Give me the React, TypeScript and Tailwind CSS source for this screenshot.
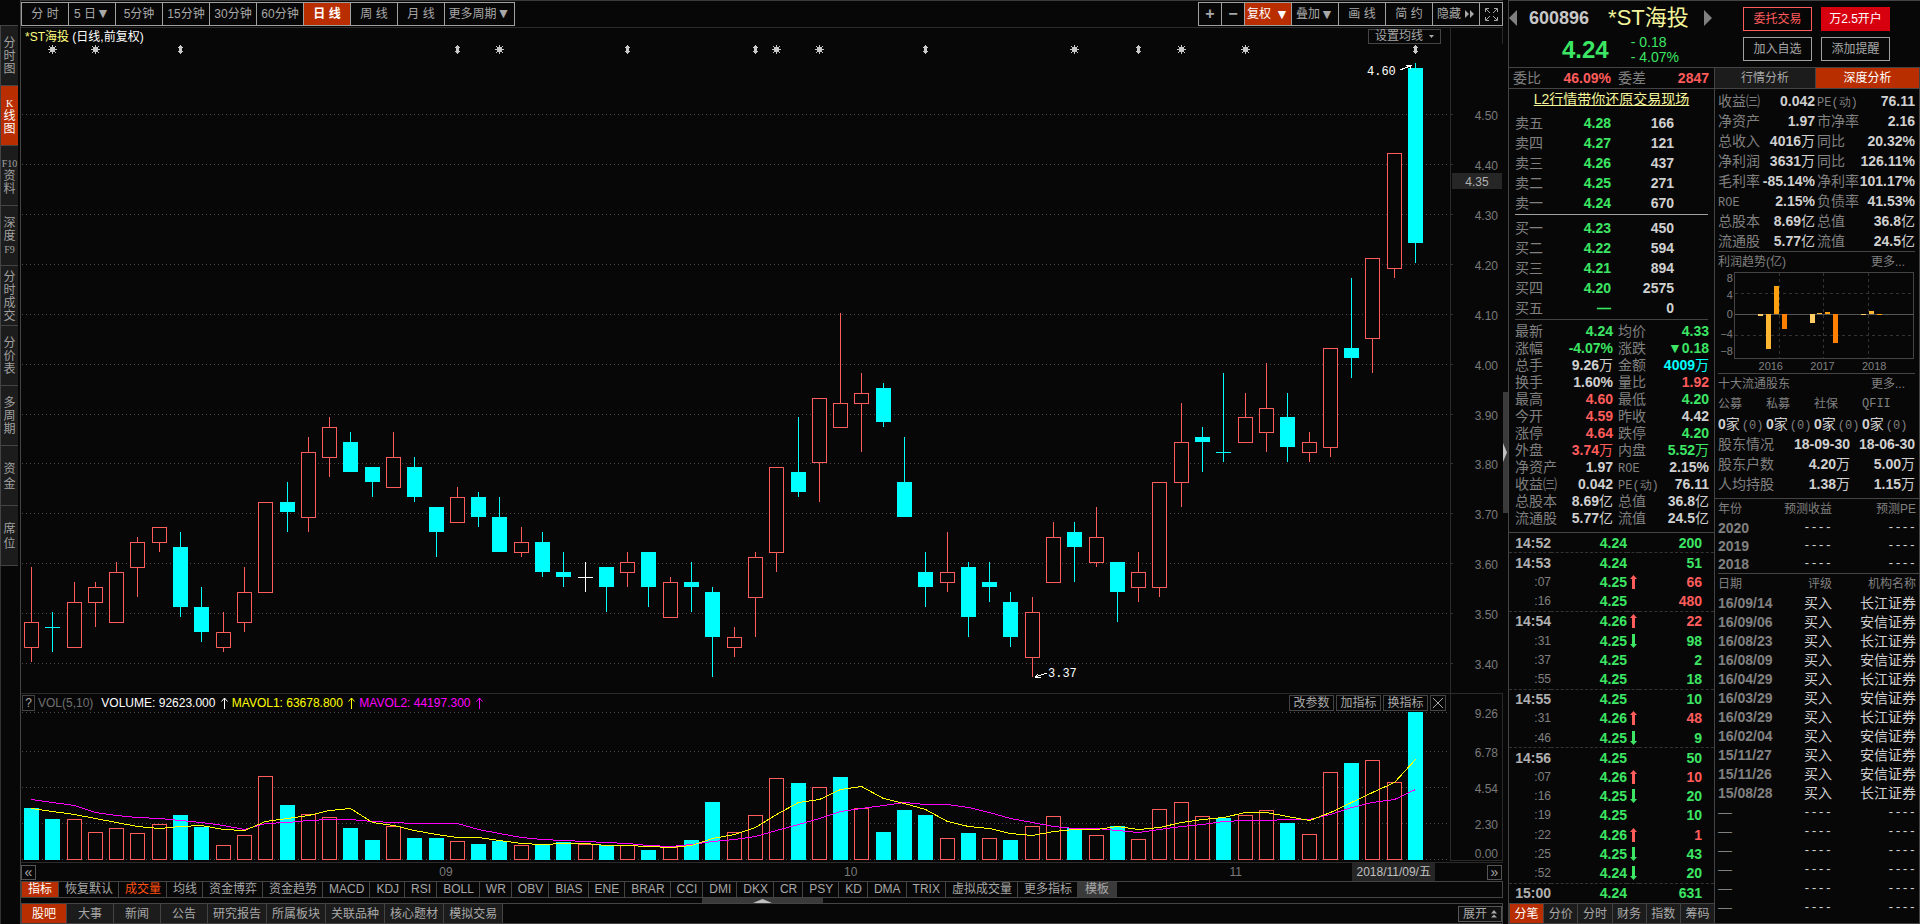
import { useState } from "react";

type Kind = "r" | "c" | "w";
// high, body top, body bottom, low (in cents), price kind, volume bar height, volume kind
type Candle = [number, number, number, number, Kind, number, Kind];

const CANDLES: Candle[] = [
  [359, 348, 343, 340, "r", 52, "c"],
  [350, 347, 347, 342, "c", 41, "c"],
  [356, 352, 343, 343, "r", 41, "r"],
  [356, 355, 352, 347, "r", 28, "r"],
  [360, 358, 348, 348, "r", 32, "r"],
  [365, 364, 359, 353, "r", 27, "r"],
  [367, 367, 364, 362, "r", 36, "r"],
  [366, 363, 351, 349, "c", 45, "c"],
  [355, 351, 346, 344, "c", 33, "c"],
  [350, 346, 343, 342, "r", 15, "r"],
  [359, 354, 348, 346, "r", 25, "r"],
  [372, 372, 354, 354, "r", 84, "r"],
  [376, 372, 370, 366, "c", 55, "c"],
  [385, 382, 369, 366, "r", 46, "r"],
  [389, 387, 381, 377, "r", 43, "r"],
  [386, 384, 378, 378, "c", 32, "c"],
  [379, 379, 376, 373, "c", 20, "c"],
  [386, 381, 375, 375, "r", 34, "r"],
  [381, 379, 373, 372, "c", 22, "c"],
  [371, 371, 366, 361, "c", 22, "c"],
  [375, 373, 368, 368, "r", 19, "r"],
  [374, 373, 369, 367, "c", 16, "c"],
  [373, 369, 362, 362, "c", 19, "c"],
  [367, 364, 362, 361, "r", 15, "r"],
  [366, 364, 358, 357, "c", 16, "c"],
  [362, 358, 357, 355, "c", 18, "c"],
  [360, 357, 357, 354, "w", 16, "r"],
  [359, 359, 355, 350, "c", 15, "c"],
  [362, 360, 358, 355, "r", 15, "r"],
  [362, 362, 355, 351, "c", 10, "c"],
  [357, 356, 349, 349, "r", 13, "r"],
  [360, 356, 355, 350, "c", 20, "c"],
  [355, 354, 345, 337, "c", 58, "c"],
  [347, 345, 343, 341, "r", 28, "r"],
  [362, 361, 353, 345, "r", 45, "r"],
  [379, 379, 362, 358, "r", 82, "r"],
  [389, 378, 374, 373, "c", 77, "c"],
  [393, 393, 380, 372, "r", 73, "r"],
  [410, 392, 387, 387, "r", 83, "c"],
  [398, 394, 392, 382, "r", 52, "r"],
  [396, 395, 388, 387, "c", 28, "c"],
  [385, 376, 369, 369, "c", 50, "c"],
  [362, 358, 355, 351, "c", 45, "c"],
  [366, 358, 356, 354, "r", 22, "r"],
  [360, 359, 349, 345, "c", 27, "c"],
  [360, 356, 355, 352, "c", 22, "r"],
  [354, 352, 345, 343, "c", 20, "c"],
  [353, 350, 341, 337, "r", 34, "r"],
  [368, 365, 356, 356, "r", 44, "r"],
  [368, 366, 363, 356, "c", 32, "c"],
  [371, 365, 360, 359, "r", 25, "r"],
  [360, 360, 354, 348, "c", 34, "c"],
  [362, 358, 355, 352, "r", 21, "r"],
  [376, 376, 355, 353, "r", 51, "r"],
  [392, 384, 376, 371, "r", 58, "r"],
  [387, 385, 384, 378, "c", 44, "r"],
  [398, 382, 382, 380, "c", 42, "c"],
  [394, 389, 384, 384, "r", 45, "r"],
  [400, 391, 386, 382, "r", 50, "r"],
  [394, 389, 383, 380, "c", 37, "c"],
  [386, 384, 382, 380, "r", 26, "r"],
  [403, 403, 383, 381, "r", 88, "r"],
  [417, 403, 401, 397, "c", 97, "c"],
  [421, 421, 405, 398, "r", 100, "r"],
  [442, 442, 419, 417, "r", 78, "r"],
  [460, 459, 424, 420, "c", 148, "c"],
];

const MAVOL1 = [
  52, 49, 46, 42, 38, 34, 32, 34, 35, 31, 30, 39, 42, 45, 50, 52, 38, 35, 30, 26, 23, 23, 20, 17, 16, 17, 17, 15, 15, 14, 13,
  15, 22, 26, 33, 46, 58, 61, 71, 74, 62, 57, 51, 39, 34, 32, 27, 25, 29, 31, 31, 34, 31, 33, 38, 41, 43, 48, 48, 44, 40, 48,
  58, 68, 78, 101,
];
const MAVOL2 = [
  61, 58, 55, 48, 45, 43, 42, 40, 38, 35, 31, 37, 38, 40, 41, 41, 39, 38, 37, 37, 37, 31, 27, 23, 21, 20, 19, 18, 17, 15, 14,
  16, 19, 21, 24, 30, 36, 42, 49, 52, 55, 58, 56, 56, 53, 48, 42, 38, 34, 32, 32, 30, 28, 31, 34, 36, 39, 40, 40, 41, 41, 46,
  53, 58, 61, 71,
];

const SUNS = [1, 3, 22, 35, 37, 49, 54, 57];
const DIAMONDS = [7, 20, 28, 34, 42, 52, 65];
const PRICE_TICKS = [450, 440, 430, 420, 410, 400, 390, 380, 370, 360, 350, 340];
const VOL_TICKS: [string, number, number][] = [
  ["9.26", 1, 7],
  ["6.78", 40, 46],
  ["4.54", 76, 82],
  ["2.30", 112, 118],
  ["0.00", 148, 147],
];

const COLORS = { r: "#ff5c5c", c: "#00ffff", w: "#ffffff" };

const cx = (i: number) => Math.round(10 + i * 21.2923);
const cy = (p: number) => Math.round(618 - (p - 340) * 4.99);

const PERIODS = ["分 时", "5 日▼", "5分钟", "15分钟", "30分钟", "60分钟", "日 线", "周 线", "月 线"];
const SIDE = [
  ["分", "时", "图"],
  ["K", "线", "图"],
  ["F10", "资", "料"],
  ["深", "度", "F9"],
  ["分", "时", "成", "交"],
  ["分", "价", "表"],
  ["多", "周", "期"],
  ["资", "金"],
  ["席", "位"],
];
const INDICATORS = [
  "恢复默认", "成交量", "均线", "资金博弈", "资金趋势", "MACD", "KDJ", "RSI", "BOLL", "WR", "OBV", "BIAS", "ENE",
  "BRAR", "CCI", "DMI", "DKX", "CR", "PSY", "KD", "DMA", "TRIX", "虚拟成交量", "更多指标",
];
const BOTTOM = ["股吧", "大事", "新闻", "公告", "研究报告", "所属板块", "关联品种", "核心题材", "模拟交易"];

const ASKS = [["卖五", "4.28", "166"], ["卖四", "4.27", "121"], ["卖三", "4.26", "437"], ["卖二", "4.25", "271"], ["卖一", "4.24", "670"]];
const BIDS = [["买一", "4.23", "450"], ["买二", "4.22", "594"], ["买三", "4.21", "894"], ["买四", "4.20", "2575"], ["买五", "—", "0"]];

const G = "text-[#3ce664]";
const R = "text-[#ff5c5c]";
const W = "text-[#d0d0d0]";
const QUOTES = [
  ["最新", "4.24", G, "均价", "4.33", G],
  ["涨幅", "-4.07%", G, "涨跌", "▼0.18", G],
  ["总手", "9.26万", W, "金额", "4009万", "text-[#00ffff]"],
  ["换手", "1.60%", W, "量比", "1.92", R],
  ["最高", "4.60", R, "最低", "4.20", G],
  ["今开", "4.59", R, "昨收", "4.42", W],
  ["涨停", "4.64", R, "跌停", "4.20", G],
  ["外盘", "3.74万", R, "内盘", "5.52万", G],
  ["净资产", "1.97", W, "ROE", "2.15%", W],
  ["收益㈢", "0.042", W, "PE(动)", "76.11", W],
  ["总股本", "8.69亿", W, "总值", "36.8亿", W],
  ["流通股", "5.77亿", W, "流值", "24.5亿", W],
];

// time, price, direction, quantity, quantity color, closes a minute
const TICKS: [string, string, string, string, string, boolean][] = [
  ["14:52", "4.24", "", "200", G, true],
  ["14:53", "4.24", "", "51", G, false],
  [":07", "4.25", "up", "66", R, false],
  [":16", "4.25", "", "480", R, true],
  ["14:54", "4.26", "up", "22", R, false],
  [":31", "4.25", "down", "98", G, false],
  [":37", "4.25", "", "2", G, false],
  [":55", "4.25", "", "18", G, true],
  ["14:55", "4.25", "", "10", G, false],
  [":31", "4.26", "up", "48", R, false],
  [":46", "4.25", "down", "9", G, true],
  ["14:56", "4.25", "", "50", G, false],
  [":07", "4.26", "up", "10", R, false],
  [":16", "4.25", "down", "20", G, false],
  [":19", "4.25", "", "10", G, false],
  [":22", "4.26", "up", "1", R, false],
  [":25", "4.25", "down", "43", G, false],
  [":52", "4.24", "down", "20", G, true],
  ["15:00", "4.24", "", "631", G, false],
];
const TICK_TABS = ["分笔", "分价", "分时", "财务", "指数", "筹码"];

const FINANCE = [
  ["收益㈢", "0.042", "PE(动)", "76.11"],
  ["净资产", "1.97", "市净率", "2.16"],
  ["总收入", "4016万", "同比", "20.32%"],
  ["净利润", "3631万", "同比", "126.11%"],
  ["毛利率", "-85.14%", "净利率", "101.17%"],
  ["ROE", "2.15%", "负债率", "41.53%"],
  ["总股本", "8.69亿", "总值", "36.8亿"],
  ["流通股", "5.77亿", "流值", "24.5亿"],
];
const HOLDERS = [
  ["股东情况", "18-09-30", "18-06-30"],
  ["股东户数", "4.20万", "5.00万"],
  ["人均持股", "1.38万", "1.15万"],
];
const RATINGS = [
  ["16/09/14", "长江证券"],
  ["16/09/06", "安信证券"],
  ["16/08/23", "长江证券"],
  ["16/08/09", "安信证券"],
  ["16/04/29", "长江证券"],
  ["16/03/29", "安信证券"],
  ["16/03/29", "长江证券"],
  ["16/02/04", "安信证券"],
  ["15/11/27", "安信证券"],
  ["15/11/26", "安信证券"],
  ["15/08/28", "长江证券"],
];
// x, y, height, color
const PROFIT_BARS: [number, number, number, string][] = [
  [40, 43, 2, "#ffcc66"],
  [48, 43, 35, "#ffb733"],
  [56, 15, 28, "#ffa010"],
  [64, 43, 15, "#ff8000"],
  [92, 43, 9, "#ffcc66"],
  [100, 42, 1, "#ffb733"],
  [108, 41, 2, "#ffa010"],
  [116, 43, 29, "#ff8000"],
  [144, 43, 1, "#ffcc66"],
  [152, 40, 3, "#ffb733"],
  [160, 43, 1, "#ffa010"],
];

// number in bold, the trailing unit (万, 亿) in normal weight
function Num({ v }: { v: string }) {
  const unit = /[万亿]$/.test(v) ? v.slice(-1) : "";
  const n = unit ? v.slice(0, -1) : v;
  return (
    <>
      <b>{n}</b>
      {unit}
    </>
  );
}

function Label({ t }: { t: string }) {
  const latin = /^[A-Z]/.test(t);
  return (
    <span className={latin ? "font-mono text-xs leading-none text-[#808080]" : "text-sm leading-none text-[#808080]"}>{t}</span>
  );
}

function Caret() {
  return <span className="text-sm leading-none">▼</span>;
}

function PriceChart() {
  return (
    <svg viewBox="0 0 1482 650" className="block h-auto w-full" shapeRendering="crispEdges">
      {PRICE_TICKS.map((p) => {
        const y = cy(p) + 1.5;
        return (
          <g key={p}>
            <line x1="1" x2="1430" y1={y} y2={y} stroke="#4a4a4a" strokeDasharray="1 3" />
            <line x1="1430" x2="1432" y1={y} y2={y} stroke="#333" />
            <text x="1477" y={y + 5} textAnchor="end" fontSize="12" fill="#7a7a7a">
              {(p / 100).toFixed(2)}
            </text>
          </g>
        );
      })}
      <line x1="1429.5" x2="1429.5" y1="0" y2="650" stroke="#2a2a2a" />
      <line x1="0" x2="1482" y1="649.5" y2="649.5" stroke="#2a2a2a" />
      <rect x="1431" y="129" width="50" height="16" fill="#262626" />
      <text x="1456" y="142" textAnchor="middle" fontSize="12" fill="#b0b0b0">4.35</text>

      {SUNS.map((i) => (
        <g key={i} stroke="#c8c8c8" fill="#c8c8c8">
          <rect x={cx(i) - 1.5} y="3.5" width="4" height="4" />
          <path d={`M${cx(i) - 4} 5.5h9M${cx(i) + 0.5} 1v9`} />
          <path d={`M${cx(i) - 3} 2l7 7M${cx(i) + 4} 2l-7 7`} />
        </g>
      ))}
      {DIAMONDS.map((i) => (
        <path key={i} d={`M${cx(i) + 0.5} 1l2.5 3h-1v3h1l-2.5 3l-2.5 -3h1v-3h-1z`} fill="#c8c8c8" />
      ))}

      {CANDLES.map(([h, t, b, l, kind], i) => {
        const x = cx(i);
        const color = COLORS[kind];
        const top = cy(t);
        const bottom = cy(b);
        return (
          <g key={i}>
            <rect x={x} y={cy(h)} width="1" height={top - cy(h)} fill={color} />
            <rect x={x} y={bottom} width="1" height={Math.max(cy(l) - bottom, 0)} fill={color} />
            {t === b && <rect x={x - 7} y={top} width="15" height="1" fill={color} />}
            {t !== b && kind === "c" && <rect x={x - 7} y={top} width="15" height={bottom - top} fill={color} />}
            {t !== b && kind === "r" && (
              <rect x={x - 6.5} y={top + 0.5} width="14" height={bottom - top} fill="#070707" stroke={color} />
            )}
          </g>
        );
      })}

      <text x="1346" y="31" fontSize="12" fill="#fff" fontFamily="Liberation Mono">4.60</text>
      <path d="M1379 26l10 -4M1385 21h6M1389 21v4" stroke="#fff" fill="none" />
      <text x="1027" y="633" fontSize="12" fill="#fff" fontFamily="Liberation Mono">3.37</text>
      <path d="M1014 633l12 -4M1014 633h6M1014 633l3 -3" stroke="#fff" fill="none" />
    </svg>
  );
}

function VolumeChart() {
  const line = (values: number[]) => values.map((v, i) => `${cx(i) + 0.5},${149.5 - v}`).join(" ");
  return (
    <svg viewBox="0 0 1482 152" className="block h-auto w-full overflow-visible" shapeRendering="crispEdges">
      {VOL_TICKS.map(([t, y, ty]) => (
        <g key={t}>
          <line x1="1" x2="1430" y1={y + 0.5} y2={y + 0.5} stroke="#4a4a4a" strokeDasharray="1 3" />
          <text x="1477" y={ty} textAnchor="end" fontSize="12" fill="#7a7a7a">{t}</text>
        </g>
      ))}
      <path d="M1429.5 0v149.5h52V0" stroke="#2a2a2a" fill="none" />
      <path d="M0 151.5h1482" stroke="#2a2a2a" />
      {CANDLES.map((c, i) => {
        const x = cx(i);
        return c[6] === "c" ? (
          <rect key={i} x={x - 7} y={149 - c[5]} width="15" height={c[5]} fill={COLORS.c} />
        ) : (
          <rect key={i} x={x - 6.5} y={149.5 - c[5]} width="14" height={c[5] - 1} fill="#070707" stroke={COLORS.r} />
        );
      })}
      <polyline points={line(MAVOL2)} fill="none" stroke="#ff00ff" />
      <polyline points={line(MAVOL1)} fill="none" stroke="#ffff00" />
    </svg>
  );
}

function ProfitChart() {
  return (
    <svg viewBox="0 0 198 102" className="block h-auto w-full text-[#808080]" shapeRendering="crispEdges">
      <rect x="16.5" y="0.5" width="180" height="86" fill="none" stroke="#444" />
      <path d="M17 21.5h180M17 63.5h180M61.5 1v85M106.5 1v85M151.5 1v85" stroke="#333" strokeDasharray="3 3" />
      <path d="M17 42.5h180" stroke="#555" />
      {PROFIT_BARS.map(([x, y, h, fill]) => (
        <rect key={x} x={x} y={y - 1} width="5" height={h} fill={fill} />
      ))}
      <g fontSize="11" fill="currentColor" textAnchor="end">
        <text x="15" y="10">8</text>
        <text x="15" y="27">4</text>
        <text x="15" y="46">0</text>
        <text x="15" y="66">−4</text>
        <text x="15" y="83">−8</text>
      </g>
      <g fontSize="11" fill="currentColor" textAnchor="middle">
        <text x="53" y="99">2016</text>
        <text x="105" y="99">2017</text>
        <text x="157" y="99">2018</text>
      </g>
    </svg>
  );
}

function UpArrow() {
  return (
    <svg width="7" height="12" viewBox="0 0 7 12" fill="none" stroke="currentColor" className="mr-1 ml-0.5 inline-block">
      <path d="M3.5 12V1M0.5 4.5L3.5 1L6.5 4.5" />
    </svg>
  );
}

function TopBar({ period, onPeriod }: { period: string; onPeriod: (p: string) => void }) {
  const tool = "flex w-[47px] items-center justify-center border-r border-[#a0a0a0]";
  return (
    <div className="flex h-7 items-start justify-between border-t border-b border-t-[#3a3a3a] border-b-[#2a2a2a] pt-px text-sm leading-none text-[#a8a8a8]">
      <div className="flex h-6 border border-[#a0a0a0] text-xs">
        {PERIODS.map((p) => (
          <button
            key={p}
            onClick={() => onPeriod(p)}
            className={`w-[47px] border-r border-[#a0a0a0] whitespace-pre ${p === period ? "bg-[#b82e00] font-bold text-white" : ""}`}
          >
            {p.replace("▼", "")}
            {p.endsWith("▼") && <Caret />}
          </button>
        ))}
        <button className="w-[69px]">
          更多周期
          <Caret />
        </button>
      </div>
      <div className="flex h-6 border border-[#a0a0a0] text-xs">
        <button className="flex w-[23px] items-center justify-center border-r border-[#a0a0a0] text-base font-bold">+</button>
        <button className="flex w-[23px] items-center justify-center border-r border-[#a0a0a0] text-base font-bold">−</button>
        <button className={`${tool} gap-1 bg-[#b82e00] text-white`}>
          复权
          <Caret />
        </button>
        <button className={tool}>
          叠加
          <Caret />
        </button>
        <button className={`${tool} whitespace-pre`}>画 线</button>
        <button className={`${tool} whitespace-pre`}>简 约</button>
        <button className={tool}>
          隐藏
          <svg width="10" height="8" viewBox="0 0 10 8" fill="currentColor" className="ml-1">
            <path d="M0 0l4 4l-4 4zM5 0l4 4l-4 4z" />
          </svg>
        </button>
        <button aria-label="全屏" className="flex w-[22px] items-center justify-center">
          <svg width="13" height="13" viewBox="0 0 13 13" fill="none" stroke="currentColor">
            <path d="M0.5 4V0.5H4M9 0.5h3.5V4M12.5 9v3.5H9M4 12.5H0.5V9M1 1l4 4M12 1l-4 4M12 12l-4 -4M1 12l4 -4" />
          </svg>
        </button>
      </div>
    </div>
  );
}

function Sidebar() {
  return (
    <nav className="flex w-[21px] shrink-0 flex-col border-r border-[#444] pr-0.5">
      <div className="h-[26px] border-b border-[#444]" />
      {SIDE.map((chars, i) => (
        <button
          key={i}
          className={`flex h-[60px] flex-col items-center justify-center border-b border-l border-[#444] pt-0.5 text-xs leading-[13px] ${
            chars.length === 2 ? "gap-0.5" : ""
          } ${i === 1 ? "bg-[#b82e00] text-white" : "bg-[#1c1c1c] text-[#a0a0a0]"}`}
        >
          {chars.map((c) => (
            <span key={c} className={/[A-Z]/.test(c) ? "font-['Liberation_Serif',serif] text-[10px]" : ""}>{c}</span>
          ))}
        </button>
      ))}
      <div className="flex-1 border-l border-[#333]" />
    </nav>
  );
}

function VolumeHeader() {
  const btn = "h-4 w-[45px] border border-[#444] text-xs leading-[14px] text-[#a8a8a8]";
  return (
    <div className="flex h-[17px] items-center text-xs leading-4">
      <button className="ml-px h-4 w-[13px] border border-[#444] leading-[14px] text-[#a8a8a8]">?</button>
      <span className="ml-[3px] text-[#707070]">VOL(5,10)</span>
      <span className="ml-2 text-white">VOLUME: 92623.000 <UpArrow /></span>
      <span className="text-[#ffff00]">MAVOL1: 63678.800 <UpArrow /></span>
      <span className="text-[#ff00ff]">MAVOL2: 44197.300 <UpArrow /></span>
      <div className="ml-auto flex gap-0.5 pr-1">
        <button className={btn}>改参数</button>
        <button className={btn}>加指标</button>
        <button className={btn}>换指标</button>
        <button aria-label="关闭" className="flex h-4 w-4 items-center justify-center border border-[#444] text-[#a8a8a8]">
          <svg width="10" height="10" viewBox="0 0 10 10" stroke="currentColor">
            <path d="M0 0l10 10M10 0L0 10" />
          </svg>
        </button>
      </div>
      <div className="h-full w-[53px] border-r border-l border-[#2a2a2a]" />
    </div>
  );
}

function DateRow() {
  const edge = "h-[15px] w-[15px] border border-[#555] text-sm leading-[10px] text-[#a8a8a8]";
  return (
    <div className="flex h-[18px] items-center text-xs text-[#7a7a7a]">
      <button className={edge}>«</button>
      <div className="grid h-full flex-1 grid-cols-[415fr_403fr_383fr_114fr_130fr] items-center">
        <span className="justify-self-end">09</span>
        <span className="justify-self-end">10</span>
        <span className="justify-self-end">11</span>
        <span />
        <span className="-ml-1 h-full justify-self-start bg-[#262626] px-1 leading-[18px] text-[#c0c0c0]">2018/11/09/五</span>
      </div>
      <button className={`${edge} mr-px`}>»</button>
    </div>
  );
}

function ChartColumn() {
  const [period, setPeriod] = useState("日 线");
  return (
    <main className="flex min-w-0 flex-1 flex-col">
      <TopBar period={period} onPeriod={setPeriod} />
      <div className="flex h-4 items-center">
        <h1 className="pt-0.5 pl-1 text-xs text-white">
          <span className="text-[#ffff80]">*ST海投</span> (日线,前复权)
        </h1>
        <button className="ml-auto flex h-[15px] items-center gap-1.5 border border-[#444] px-1.5 text-xs leading-3 text-[#a8a8a8]">
          设置均线
          <svg width="5" height="3" viewBox="0 0 5 3" fill="currentColor">
            <path d="M0 0h5L2.5 3z" />
          </svg>
        </button>
        <div className="ml-[9px] h-full w-[53px] border-r border-l border-[#2a2a2a]" />
      </div>
      <PriceChart />
      <VolumeHeader />
      <VolumeChart />
      <DateRow />
      <div className="flex h-[17px] border border-[#444] text-xs leading-[15px] text-[#a8a8a8]">
        <button className="bg-[#b82e00] px-1.5 text-white">指标</button>
        {INDICATORS.map((t) => (
          <button key={t} className={`border-l border-[#444] pr-[5px] pl-1.5 ${t === "成交量" ? "text-[#ff5010]" : ""}`}>
            {t}
          </button>
        ))}
        <button className="bg-[#3a3a3a] px-2">模板</button>
      </div>
      <div className="flex h-[5px] justify-center">
        <div className="flex w-[121px] items-end justify-center bg-[#3a3a3a]">
          <svg width="19" height="4" viewBox="0 0 19 4" fill="#c0c0c0">
            <path d="M0 4L9.5 0L19 4z" />
          </svg>
        </div>
      </div>
      <div className="flex flex-1 border border-[#444] text-xs leading-4 text-[#a8a8a8]">
        {BOTTOM.map((t, i) => (
          <button
            key={t}
            className={`border-r border-[#444] ${t.length > 2 ? "px-[5px]" : i ? "px-[11px]" : "px-[10px]"} ${
              i ? "bg-[#1c1c1c]" : "bg-[#b82e00] text-white"
            }`}
          >
            {t}
          </button>
        ))}
        <button className="ml-auto flex h-4 items-center gap-1 self-center border border-[#555] bg-[#111] px-1 leading-none">
          展开
          <svg width="6" height="8" viewBox="0 0 6 8" fill="currentColor">
            <path d="M0 3.5L3 0l3 3.5zM0 7.5L3 4.5l3 3z" />
          </svg>
        </button>
      </div>
    </main>
  );
}

function Splitter() {
  return (
    <div className="flex w-1.5 shrink-0 items-center border-r border-[#444] pb-5">
      <div className="flex h-[121px] w-full items-center bg-[#3a3a3a]">
        <svg width="4" height="19" viewBox="0 0 4 19" fill="#c0c0c0">
          <path d="M0 0L4 9.5L0 19z" />
        </svg>
      </div>
    </div>
  );
}

function QuoteHeader() {
  const btn = "h-6 w-[69px] border text-xs leading-[22px]";
  return (
    <header className="flex h-[67px] items-start border-t border-[#444]">
      <div className="w-[206px]">
        <div className="flex h-[34px] items-center pr-[3px]">
          <button aria-label="上一只" className="text-[#808080]">
            <svg width="8" height="16" viewBox="0 0 8 16" fill="currentColor"><path d="M8 0v16L0 8z" /></svg>
          </button>
          <b className="ml-3 text-lg leading-none text-[#c8c8c8]">600896</b>
          <span className="ml-[19px] text-[22px] leading-none whitespace-nowrap text-[#f4f49a]">*ST海投</span>
          <button aria-label="下一只" className="ml-auto text-[#808080]">
            <svg width="8" height="16" viewBox="0 0 8 16" fill="currentColor"><path d="M0 0v16L8 8z" /></svg>
          </button>
        </div>
        <div className="flex items-center pl-[53px] text-[#3ce664]">
          <b className="text-2xl leading-[30px]">4.24</b>
          <div className="ml-[22px] text-sm leading-[15px]">
            <p>- 0.18</p>
            <p>- 4.07%</p>
          </div>
        </div>
      </div>
      <div className="grid flex-1 grid-cols-[69px_69px] gap-x-[9px] gap-y-1.5 pt-1.5 pl-7">
        <button className={`${btn} border-[#ff5c5c] text-[#ff5c5c]`}>委托交易</button>
        <button className={`${btn} border-[#d7000f] bg-[#d7000f] text-white`}>万2.5开户</button>
        <button className={`${btn} border-[#a0a0a0] text-[#a8a8a8]`}>加入自选</button>
        <button className={`${btn} border-[#a0a0a0] text-[#a8a8a8]`}>添加提醒</button>
      </div>
    </header>
  );
}

function BookTable({ rows }: { rows: string[][] }) {
  return (
    <table className="w-full table-fixed text-sm leading-5">
      <tbody>
        {rows.map(([label, price, qty]) => (
          <tr key={label} className="h-5">
            <th scope="row" className="w-10 p-0 text-left font-normal text-[#808080]">{label}</th>
            <td className="w-14 p-0 text-right font-bold text-[#3ce664]">{price}</td>
            <td className="p-0 pr-[34px] text-right font-bold text-[#d0d0d0]">{qty}</td>
          </tr>
        ))}
      </tbody>
    </table>
  );
}

function TickArrow({ dir }: { dir: string }) {
  if (!dir) return null;
  return (
    <svg width="7" height="14" viewBox="0 0 7 14" className={dir === "up" ? "text-[#ff5c5c]" : "rotate-180 text-[#3ce664]"}>
      <path d="M3.5 0L7 4H5v10H2V4H0z" fill="currentColor" />
    </svg>
  );
}

function QuoteColumn() {
  const [tab, setTab] = useState("分笔");
  return (
    <section className="flex w-[206px] shrink-0 flex-col border-r border-[#444]">
      <div className="flex h-[21px] items-center justify-between border-b border-[#444] pr-[5px] pl-1 text-sm leading-none">
        <div className="flex w-[98px] justify-between">
          <span className="text-[#808080]">委比</span>
          <b className="text-[#ff5c5c]">46.09%</b>
        </div>
        <div className="flex w-[91px] justify-between">
          <span className="text-[#808080]">委差</span>
          <b className="text-[#ff5c5c]">2847</b>
        </div>
      </div>
      <a href="#l2" className="mx-auto h-6 text-sm leading-5 whitespace-nowrap text-[#f4f49a] underline">
        L2行情带你还原交易现场
      </a>
      <div className="mx-1.5 border-b border-[#a0a0a0] pb-px"><BookTable rows={ASKS} /></div>
      <div className="mx-1.5 border-b border-[#444] pt-[3px] pb-px"><BookTable rows={BIDS} /></div>
      <table className="mt-[3px] mb-[5px] ml-1.5 w-[194px] table-fixed">
        <tbody>
          {QUOTES.map(([a, av, ac, b, bv, bc]) => (
            <tr key={a} className="h-[17px] text-sm leading-[17px] whitespace-nowrap">
              <th scope="row" className="w-[43px] p-0 text-left font-normal"><Label t={a} /></th>
              <td className={`w-[55px] p-0 text-right ${ac}`}><Num v={av} /></td>
              <th scope="row" className="w-12 p-0 pl-[5px] text-left font-normal"><Label t={b} /></th>
              <td className={`p-0 text-right ${bc}`}><Num v={bv} /></td>
            </tr>
          ))}
        </tbody>
      </table>
      <div className="flex flex-1 flex-col border-t border-[#444]">
        <table className="h-full w-full table-fixed border-collapse">
          <tbody>
            {TICKS.map(([time, price, dir, qty, color, last], i) => (
              <tr key={i} className={`text-sm leading-[18px] ${last ? "border-b border-dashed border-[#333]" : ""}`}>
                <td className={`w-[42px] p-0 text-right ${time.length > 3 ? "font-bold text-[#b0b0b0]" : "text-xs text-[#808080]"}`}>
                  {time}
                </td>
                <td className="w-[76px] p-0 text-right font-bold text-[#3ce664]">{price}</td>
                <td className="w-3 p-0 pl-[3px] align-middle"><TickArrow dir={dir} /></td>
                <td className={`p-0 pr-3 text-right font-bold ${color}`}>{qty}</td>
              </tr>
            ))}
          </tbody>
        </table>
      </div>
      <div className="flex h-[21px] border-t border-b border-[#444] text-xs">
        {TICK_TABS.map((t) => (
          <button
            key={t}
            onClick={() => setTab(t)}
            className={`flex-1 border-l border-[#444] ${t === tab ? "bg-[#b82e00] text-white" : "bg-[#1c1c1c] text-[#a8a8a8]"}`}
          >
            {t}
          </button>
        ))}
      </div>
    </section>
  );
}

function SectionTitle({ title }: { title: string }) {
  return (
    <div className="flex h-5 items-center justify-between pr-2.5 text-xs text-[#808080]">
      <h2>{title}</h2>
      <a href="#more">更多...</a>
    </div>
  );
}

function DepthColumn() {
  return (
    <section className="flex flex-1 flex-col border-r border-b border-[#444]">
      <div className="flex h-[21px] border-b border-[#444] text-xs">
        <button className="w-[101px] border-r border-[#444] bg-[#1c1c1c] text-[#a8a8a8]">行情分析</button>
        <button className="flex-1 bg-[#b82e00] text-white">深度分析</button>
      </div>
      <table className="mt-0.5 ml-[3px] w-[197px] table-fixed">
        <tbody>
          {FINANCE.map(([a, av, b, bv]) => (
            <tr key={a} className="h-5 text-sm leading-5 whitespace-nowrap text-[#d0d0d0]">
              <th scope="row" className="w-[43px] p-0 text-left font-normal"><Label t={a} /></th>
              <td className="w-[54px] p-0 text-right"><Num v={av} /></td>
              <th scope="row" className="w-11 p-0 pl-[2px] text-left font-normal"><Label t={b} /></th>
              <td className="p-0 text-right"><Num v={bv} /></td>
            </tr>
          ))}
        </tbody>
      </table>
      <div className="mr-1 ml-[3px] border-t border-[#444]">
        <SectionTitle title="利润趋势(亿)" />
        <ProfitChart />
      </div>
      <div className="mr-1 ml-[3px] border-t border-[#444]">
        <SectionTitle title="十大流通股东" />
        <div className="grid grid-cols-[repeat(4,48px)] text-xs leading-5 text-[#808080]">
          {["公募", "私募", "社保", "QFII"].map((t) => (
            <div key={t}>
              <p className={t === "QFII" ? "font-mono" : ""}>{t}</p>
              <p className="text-sm leading-5 whitespace-nowrap">
                <span className="text-[#d0d0d0]"><b>0</b>家</span>
                <span className="ml-0.5 font-mono text-xs">(0)</span>
              </p>
            </div>
          ))}
        </div>
        <table className="w-full table-fixed text-sm leading-5 text-[#d0d0d0]">
          <tbody>
            {HOLDERS.map(([label, a, b]) => (
              <tr key={label} className="h-5">
                <th scope="row" className="w-[58px] p-0 text-left font-normal text-[#808080]">{label}</th>
                <td className="p-0 text-right"><Num v={a} /></td>
                <td className="w-[65px] p-0 text-right"><Num v={b} /></td>
              </tr>
            ))}
          </tbody>
        </table>
      </div>
      <table className="mt-1 w-full table-fixed border-t border-[#444] text-sm text-[#d0d0d0]">
        <thead>
          <tr className="h-5 text-xs text-[#808080]">
            <th className="w-16 p-0 pl-[3px] text-left font-normal">年份</th>
            <th className="w-[53px] p-0 text-right font-normal whitespace-nowrap">预测收益</th>
            <th className="p-0 pr-[3px] text-right font-normal">预测PE</th>
          </tr>
        </thead>
        <tbody>
          {["2020", "2019", "2018"].map((y) => (
            <tr key={y} className="h-[18px] leading-[18px]">
              <td className="p-0 pl-[3px] font-bold text-[#808080]">{y}</td>
              <td className="p-0 text-right font-mono text-xs">----</td>
              <td className="p-0 pr-[3px] text-right font-mono text-xs">----</td>
            </tr>
          ))}
        </tbody>
      </table>
      <table className="ml-[3px] table-fixed border-t border-[#444] text-sm text-[#d0d0d0]">
        <thead>
          <tr className="h-[21px] text-xs text-[#808080]">
            <th className="w-16 p-0 text-left font-normal">日期</th>
            <th className="w-[50px] p-0 text-right font-normal">评级</th>
            <th className="p-0 pr-[3px] text-right font-normal">机构名称</th>
          </tr>
        </thead>
        <tbody>
          {RATINGS.map(([date, org], i) => (
            <tr key={i} className="h-[19px] leading-[19px]">
              <td className="p-0 font-bold text-[#808080]">{date}</td>
              <td className="p-0 text-right">买入</td>
              <td className="p-0 pr-[3px] text-right">{org}</td>
            </tr>
          ))}
          {[0, 1, 2, 3, 4, 5].map((i) => (
            <tr key={i} className="h-[19px] leading-[19px]">
              <td className="p-0 text-[#808080]">—</td>
              <td className="p-0 text-right font-mono text-xs">----</td>
              <td className="p-0 pr-[3px] text-right font-mono text-xs">----</td>
            </tr>
          ))}
        </tbody>
      </table>
    </section>
  );
}

export default function App() {
  return (
    <div className="flex min-h-screen bg-[#070707] font-['Liberation_Sans','Noto_Sans_CJK_SC',sans-serif]">
      <Sidebar />
      <ChartColumn />
      <Splitter />
      <aside className="flex w-[411px] shrink-0 flex-col">
        <QuoteHeader />
        <div className="flex flex-1 border-t border-[#444]">
          <QuoteColumn />
          <DepthColumn />
        </div>
      </aside>
    </div>
  );
}
